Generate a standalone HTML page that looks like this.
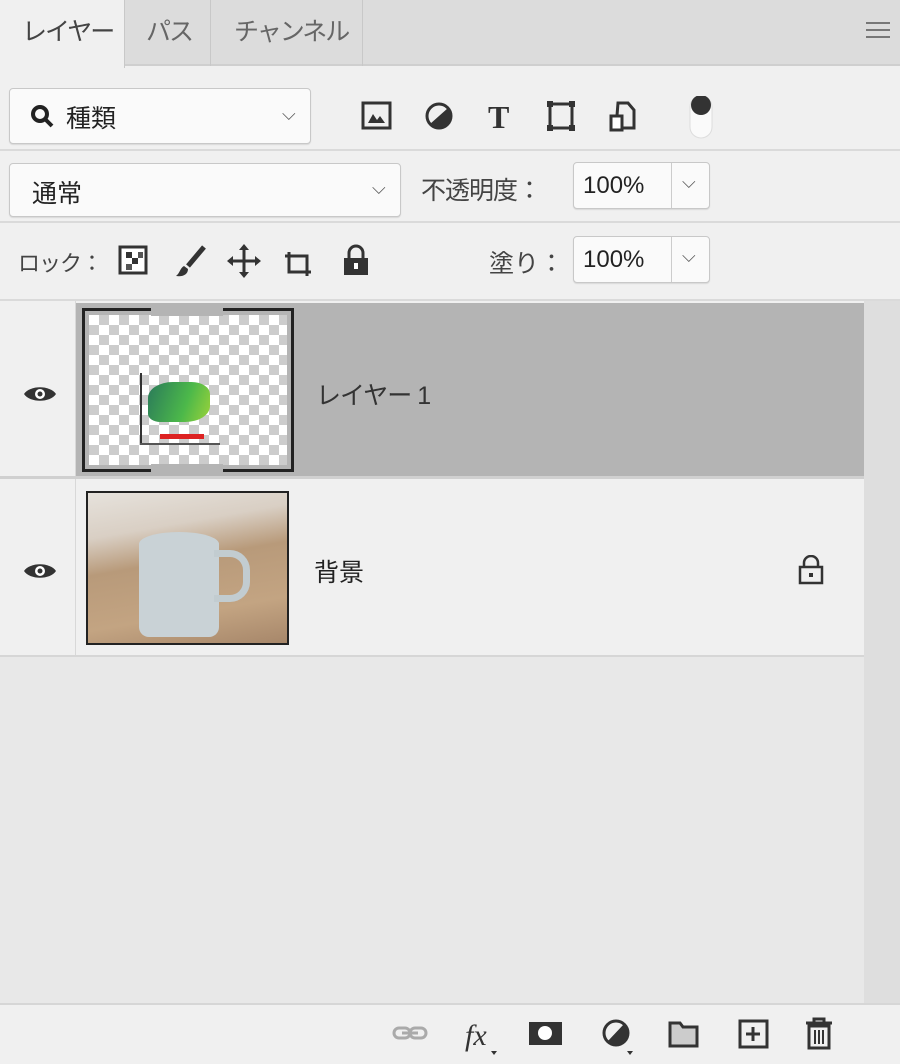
<!DOCTYPE html><html><head><meta charset="utf-8"><style>
*{margin:0;padding:0;box-sizing:border-box}
body{width:900px;height:1064px;background:#f0f0f0;font-family:"Liberation Sans","Noto Sans CJK JP",sans-serif;color:#333;position:relative;overflow:hidden}
.a{position:absolute}
.box{position:absolute;background:#fafafa;border:1px solid #c8c8c8;border-radius:4px;box-shadow:0 1px 1px rgba(0,0,0,.1)}
.t{position:absolute;font-size:25px}
.chk{background-color:#fff;background-image:linear-gradient(45deg,#ccc 25%,transparent 25%,transparent 75%,#ccc 75%),linear-gradient(45deg,#ccc 25%,transparent 25%,transparent 75%,#ccc 75%);background-size:20px 20px;background-position:0 0,10px 10px}
</style></head><body>
<div class="a" style="left:0;top:0;width:900px;height:66px;background:#dcdcdc;border-bottom:2px solid #cfcfcf"></div>
<div class="a" style="left:0;top:0;width:125px;height:68px;background:#f0f0f0;border-right:1px solid #c8c8c8"></div>
<div class="a" style="left:210px;top:0;width:1px;height:66px;background:#c8c8c8"></div>
<div class="a" style="left:362px;top:0;width:1px;height:66px;background:#c8c8c8"></div>
<div class="t" style="left:22px;top:12px;color:#444;letter-spacing:-2px">レイヤー</div>
<div class="t" style="left:146px;top:12px;color:#666;letter-spacing:-2px">パス</div>
<div class="t" style="left:234px;top:12px;color:#666;letter-spacing:-2px">チャンネル</div>
<div class="a" style="left:866px;top:22px;width:24px;height:16px;border-top:2px solid #777;border-bottom:2px solid #777"><div style="margin-top:5px;border-top:2px solid #777"></div></div>

<div class="box" style="left:9px;top:88px;width:302px;height:56px"></div>
<svg class="a" style="left:30px;top:104px" width="26" height="28"><circle cx="10" cy="10" r="7" fill="none" stroke="#222" stroke-width="4"/><path d="M15 15L22 22" stroke="#222" stroke-width="4"/></svg>
<div class="t" style="left:66px;top:99px;color:#222">種類</div>
<div class="t" style="left:282px;top:104px;font-size:18px;color:#555">⌵</div>
<svg class="a" style="left:360px;top:96px" width="360" height="44">
<rect x="3" y="7" width="27" height="25" fill="none" stroke="#333" stroke-width="3"/><path d="M8 27l5-9 4 6 3-4 5 7z" fill="#333"/>
<circle cx="79" cy="20" r="12" fill="none" stroke="#333" stroke-width="3"/><path d="M88 12A12 12 0 0 1 70 28z" fill="#333"/>
<text x="128" y="32" font-family="Liberation Serif" font-weight="bold" font-size="32" fill="#333">T</text>
<rect x="190" y="8" width="22" height="24" fill="none" stroke="#333" stroke-width="3"/><rect x="187" y="5" width="6" height="6" fill="#333"/><rect x="209" y="5" width="6" height="6" fill="#333"/><rect x="187" y="29" width="6" height="6" fill="#333"/><rect x="209" y="29" width="6" height="6" fill="#333"/>
<path d="M258 7h10l6 7v18h-18z" fill="none" stroke="#333" stroke-width="3"/><rect x="251" y="20" width="11" height="14" fill="#fff" stroke="#333" stroke-width="3"/>
<rect x="330" y="0" width="22" height="42" rx="11" fill="#fafafa" stroke="#ddd"/><circle cx="341" cy="9" r="10" fill="#333"/>
</svg>
<div class="a" style="left:0;top:149px;width:900px;height:2px;background:#dadada"></div>

<div class="box" style="left:9px;top:163px;width:392px;height:54px"></div>
<div class="t" style="left:32px;top:174px;color:#222">通常</div>
<div class="t" style="left:372px;top:178px;font-size:18px;color:#555">⌵</div>
<div class="t" style="left:421px;top:171px;color:#444;letter-spacing:-1px">不透明度：</div>
<div class="box" style="left:573px;top:162px;width:137px;height:47px"></div>
<div class="a" style="left:671px;top:163px;width:1px;height:45px;background:#ccc"></div>
<div class="t" style="left:583px;top:172px;font-size:24px;color:#222">100%</div>
<div class="t" style="left:682px;top:172px;font-size:18px;color:#555">⌵</div>
<div class="a" style="left:0;top:221px;width:900px;height:2px;background:#dadada"></div>

<div class="t" style="left:18px;top:246px;font-size:22px;color:#444;letter-spacing:-1px">ロック：</div>
<svg class="a" style="left:118px;top:244px" width="260" height="36">
<rect x="2" y="3" width="26" height="26" fill="#fff" stroke="#333" stroke-width="3"/><rect x="8" y="8" width="6" height="6" fill="#333"/><rect x="14" y="14" width="6" height="6" fill="#333"/><rect x="8" y="20" width="6" height="6" fill="#555"/><rect x="20" y="8" width="5" height="6" fill="#555"/>
<path d="M86 3L70 22" stroke="#333" stroke-width="5"/><path d="M66 22c-4 2-4 7-8 10 6 1 12-1 12-7z" fill="#333"/>
<path d="M126 2v30M111 17h30" stroke="#333" stroke-width="3"/><path d="M126 0l-5 6h10zM126 34l-5-6h10zM109 17l6-5v10zM143 17l-6-5v10z" fill="#333"/>
<path d="M171 8v20h22M167 12h22v20" stroke="#333" stroke-width="3" fill="none"/>
<rect x="226" y="14" width="24" height="17" fill="#333"/><path d="M231 14v-5a7 7 0 0 1 14 0v5" fill="none" stroke="#333" stroke-width="3"/><rect x="236" y="19" width="4" height="6" fill="#fff"/>
</svg>
<div class="t" style="left:489px;top:244px;color:#444">塗り：</div>
<div class="box" style="left:573px;top:236px;width:137px;height:47px"></div>
<div class="a" style="left:671px;top:237px;width:1px;height:45px;background:#ccc"></div>
<div class="t" style="left:583px;top:246px;font-size:24px;color:#222">100%</div>
<div class="t" style="left:682px;top:246px;font-size:18px;color:#555">⌵</div>
<div class="a" style="left:0;top:299px;width:900px;height:2px;background:#dadada"></div>

<div class="a" style="left:864px;top:301px;width:36px;height:703px;background:#dedede"></div>
<div class="a" style="left:0;top:657px;width:864px;height:347px;background:#e8e8e8"></div>
<div class="a" style="left:75px;top:301px;width:1px;height:356px;background:#d8d8d8"></div>
<div class="a" style="left:76px;top:303px;width:788px;height:173px;background:#b4b4b4"></div>
<div class="a" style="left:0;top:476px;width:864px;height:3px;background:#d0d0d0"></div>
<div class="a" style="left:0;top:655px;width:864px;height:2px;background:#d6d6d6"></div>
<div class="a" style="left:82px;top:308px;width:212px;height:164px;border:3px solid #222;background:#b4b4b4"></div>
<div class="a chk" style="left:89px;top:315px;width:198px;height:150px"></div>
<div class="a" style="left:151px;top:306px;width:72px;height:10px;background:#b4b4b4"></div>
<div class="a" style="left:151px;top:464px;width:72px;height:10px;background:#b4b4b4"></div>
<div class="a" style="left:140px;top:373px;width:2px;height:72px;background:#333"></div>
<div class="a" style="left:140px;top:443px;width:80px;height:2px;background:#555"></div>
<div class="a" style="left:148px;top:382px;width:62px;height:40px;background:linear-gradient(110deg,#2a7a5a,#4cb84a 60%,#9bd23a);border-radius:40% 30% 40% 20%"></div>
<div class="a" style="left:160px;top:434px;width:44px;height:5px;background:#d22"></div>
<div class="t" style="left:316px;top:376px;color:#333;letter-spacing:-1px">レイヤー 1</div>

<div class="a" style="left:86px;top:491px;width:203px;height:154px;border:2px solid #222;background:linear-gradient(170deg,#e6e2dc 0%,#d9cfc4 25%,#b89a7a 45%,#c3a482 75%,#a7876a 100%)"></div>
<div class="a" style="left:139px;top:532px;width:80px;height:105px;background:#c9d2d6;border-radius:40px 40px 10px 10px/12px 12px 10px 10px"></div>
<div class="a" style="left:214px;top:550px;width:36px;height:52px;border:7px solid #c2ccd0;border-radius:0 20px 20px 0;border-left:none"></div>
<div class="t" style="left:314px;top:553px;color:#222">背景</div>
<svg class="a" style="left:797px;top:555px" width="28" height="32"><path d="M7 12V8a7 7 0 0 1 14 0v4" fill="none" stroke="#333" stroke-width="2.5"/><rect x="3" y="12" width="22" height="16" fill="none" stroke="#333" stroke-width="2.5"/><rect x="12" y="18" width="4" height="4" fill="#333"/></svg>
<svg class="a" style="left:22px;top:383px" width="36" height="22"><path d="M2 11C8 2 28 2 34 11 28 20 8 20 2 11z" fill="#333"/><circle cx="18" cy="11" r="5" fill="#fff"/><circle cx="18" cy="11" r="2.5" fill="#333"/></svg>
<svg class="a" style="left:22px;top:560px" width="36" height="22"><path d="M2 11C8 2 28 2 34 11 28 20 8 20 2 11z" fill="#333"/><circle cx="18" cy="11" r="5" fill="#fff"/><circle cx="18" cy="11" r="2.5" fill="#333"/></svg>

<div class="a" style="left:0;top:1003px;width:900px;height:2px;background:#d6d6d6"></div>
<svg class="a" style="left:390px;top:1015px" width="450" height="45">
<rect x="4" y="13" width="16" height="10" rx="5" fill="none" stroke="#aaa" stroke-width="3"/><rect x="20" y="13" width="16" height="10" rx="5" fill="none" stroke="#aaa" stroke-width="3"/><path d="M12 18h16" stroke="#aaa" stroke-width="3"/>
<text x="75" y="30" font-family="Liberation Serif" font-style="italic" font-size="30" fill="#333">fx</text><path d="M101 36h6l-3 4z" fill="#333"/>
<rect x="139" y="7" width="33" height="23" fill="#333"/><circle cx="155" cy="18" r="7" fill="#fff"/>
<circle cx="226" cy="18" r="12" fill="none" stroke="#333" stroke-width="3"/><path d="M234 9A12 12 0 0 1 217 27z" fill="#333"/><path d="M237 36h6l-3 4z" fill="#333"/>
<path d="M280 8h10l3 4h14v19h-27z" fill="#ccc" stroke="#333" stroke-width="3"/>
<rect x="350" y="6" width="27" height="26" fill="none" stroke="#333" stroke-width="3"/><path d="M363 12v14M356 19h14" stroke="#333" stroke-width="3"/>
<path d="M416 8h26M424 8V4h10v4M419 11h20v22h-20z" fill="none" stroke="#333" stroke-width="3"/><path d="M425 15v14M429 15v14M433 15v14" stroke="#333" stroke-width="2"/>
</svg>
</body></html>
